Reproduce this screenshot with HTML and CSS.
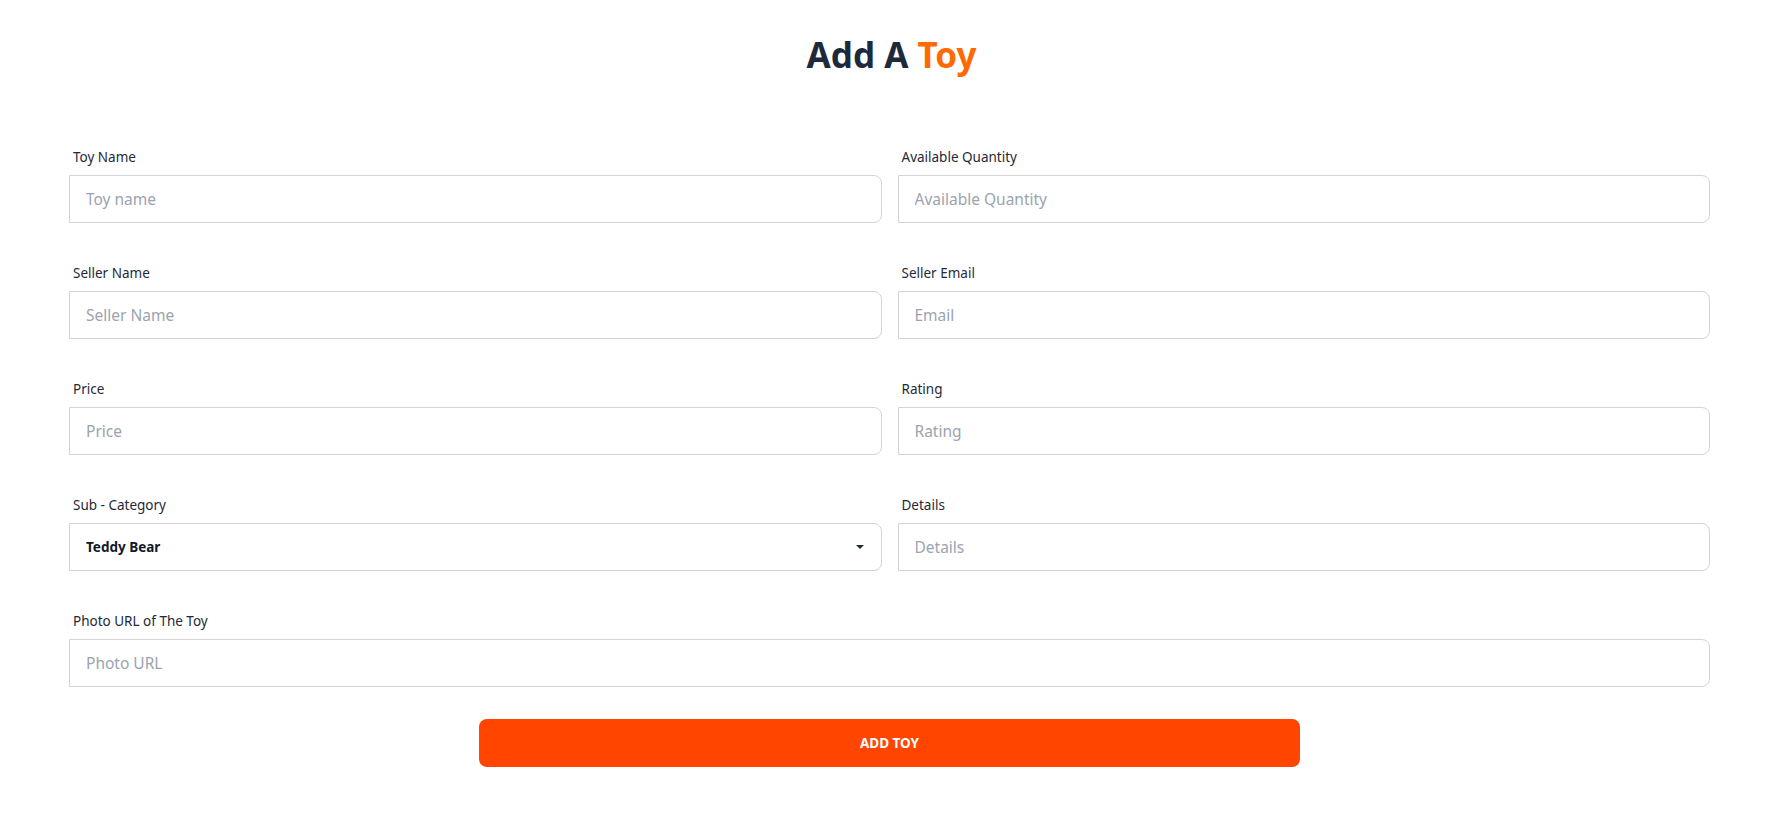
FILE: index.html
```html
<!DOCTYPE html>
<html lang="en">
<head>
<meta charset="utf-8">
<title>Add A Toy</title>
<link rel="stylesheet" href="styles.css">
</head>
<body>
<main class="page">
  <h1 class="title">Add A <span class="accent">Toy</span></h1>
  <form class="form">
    <div class="grid">
      <div class="field">
        <label class="label">Toy Name</label>
        <input class="input" type="text" placeholder="Toy name">
      </div>
      <div class="field">
        <label class="label">Available Quantity</label>
        <input class="input" type="text" placeholder="Available Quantity">
      </div>
      <div class="field">
        <label class="label">Seller Name</label>
        <input class="input" type="text" placeholder="Seller Name">
      </div>
      <div class="field">
        <label class="label">Seller Email</label>
        <input class="input" type="text" placeholder="Email">
      </div>
      <div class="field">
        <label class="label">Price</label>
        <input class="input" type="text" placeholder="Price">
      </div>
      <div class="field">
        <label class="label">Rating</label>
        <input class="input" type="text" placeholder="Rating">
      </div>
      <div class="field">
        <label class="label">Sub - Category</label>
        <div class="select-wrap">
          <select class="input select">
            <option>Teddy Bear</option>
            <option>Horse</option>
            <option>Dinosaur</option>
          </select>
          <span class="caret"></span>
        </div>
      </div>
      <div class="field">
        <label class="label">Details</label>
        <input class="input" type="text" placeholder="Details">
      </div>
      <div class="field wide">
        <label class="label">Photo URL of The Toy</label>
        <input class="input" type="text" placeholder="Photo URL">
      </div>
    </div>
    <button class="btn" type="button">Add Toy</button>
  </form>
</main>
</body>
</html>
```
FILE: styles.css
```css
* { box-sizing: border-box; }
html, body { margin: 0; padding: 0; background: #ffffff; }
body {
  font-family: "Noto Sans", "Open Sans", "Liberation Sans", sans-serif;
  color: #1f2937;
}
.page {
  padding: 35px 61px 0 69px;
}
.title {
  margin: 0;
  text-align: center;
  font-size: 35px;
  line-height: 40px;
  font-weight: 700;
  color: #1e293b;
  padding-left: 4px;
}
.accent { color: #ff6a00; }
.form {
  margin-top: 64px;
}
.grid {
  display: grid;
  grid-template-columns: 1fr 1fr;
  column-gap: 16px;
  row-gap: 32px;
}
.field {
  display: flex;
  flex-direction: column;
}
.wide { grid-column: 1 / span 2; }
.label {
  display: block;
  padding: 8px 4px;
  font-size: 13.5px;
  line-height: 20px;
  color: #1f2937;
}
.input {
  width: 100%;
  height: 48px;
  margin: 0;
  padding: 0 16px;
  border: 1px solid #d4d4d8;
  border-radius: 0 8px 8px 0;
  background: #ffffff;
  font-family: inherit;
  font-size: 15.5px;
  color: #1f2937;
  outline: none;
}
.input::placeholder { color: #9ca3af; opacity: 1; }
.select-wrap { position: relative; }
.select {
  appearance: none;
  -webkit-appearance: none;
  font-size: 13.5px;
  font-weight: 700;
  color: #111827;
}
.caret {
  position: absolute;
  right: 18px;
  top: 22px;
  width: 0;
  height: 0;
  border-left: 4px solid transparent;
  border-right: 4px solid transparent;
  border-top: 4px solid #1f2937;
  pointer-events: none;
}
.btn {
  display: block;
  width: 50%;
  height: 48px;
  margin: 32px auto 0;
  border: none;
  border-radius: 8px;
  background: #ff4500;
  color: #ffffff;
  font-family: inherit;
  font-size: 13.5px;
  font-weight: 700;
  text-transform: uppercase;
  cursor: pointer;
}
```
